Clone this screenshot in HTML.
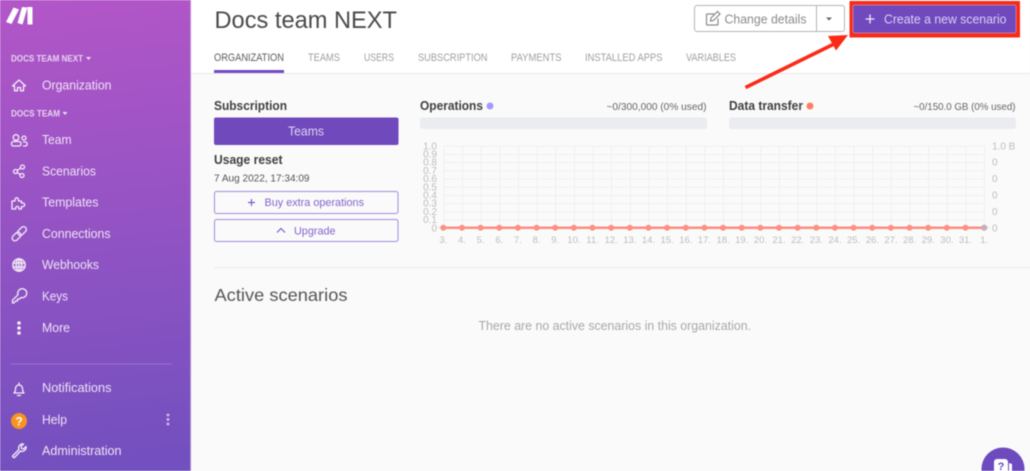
<!DOCTYPE html>
<html><head><meta charset="utf-8"><style>
html,body{margin:0;padding:0;width:1030px;height:471px;overflow:hidden;background:#fafafa}
svg{display:block;filter:blur(.4px)}
text{font-family:"Liberation Sans",sans-serif;white-space:pre}
.n{font-size:12.5px;fill:#f0e2f6}
.h{font-size:9.5px;font-weight:bold;fill:#e8d3ef}
.i{fill:none;stroke:#f5ecf9;stroke-width:1.3;stroke-linecap:round;stroke-linejoin:round}
.t{font-size:10.800px;fill:#a0a0a0}
.b{font-size:12.5px;font-weight:bold;fill:#3f3f3f}
.c{font-size:10px;fill:#bdbdbd}
.x{font-size:9.500px;fill:#bdbdbd;text-anchor:middle}
.p{font-size:11px;fill:#8464cd}
.u{font-size:10.500px;fill:#666}
</style></head><body>
<svg width="1030" height="471" viewBox="0 0 1030 471" xmlns="http://www.w3.org/2000/svg">
<defs>
<linearGradient id="sb" x1="70" y1="0" x2="120" y2="471" gradientUnits="userSpaceOnUse"><stop offset="0" stop-color="#b256c8"/><stop offset="1" stop-color="#7250bf"/></linearGradient>
<pattern id="g" x="443.300" y="145.700" width="18.650" height="8.200" patternUnits="userSpaceOnUse"><path d="M.5 0V8.200M0 .5H18.650" stroke="#f0f0f0" stroke-width="1" fill="none"/></pattern>
</defs>
<rect width="1030" height="471" fill="#fafafa"/>
<rect x="191" width="839" height="73" fill="#fff"/>
<rect x="191" y="73" width="839" height="1" fill="#e9e9e9"/>

<!-- sidebar -->
<rect width="191" height="471" fill="url(#sb)"/>
<rect x="190" width="1" height="471" fill="#c9a8de" opacity=".6"/>
<g fill="#fff"><path d="M6 22 13.500 7.500 19 9.500 11.500 24Z"/><path d="M17.500 23 22 7 27.500 7.500 22.500 24.500Z"/><path d="M27.500 7H32.500V24.500H27.500Z"/></g>

<text class="h" x="11" y="61.500" textLength="72" lengthAdjust="spacingAndGlyphs">DOCS TEAM NEXT</text><path d="M86 57h5l-2.500 3z" fill="#eddcf3"/>
<text class="h" x="11" y="116.500" textLength="49" lengthAdjust="spacingAndGlyphs">DOCS TEAM</text><path d="M62.500 112h5l-2.500 3z" fill="#eddcf3"/>

<text class="n" x="42" y="89.500" textLength="69.500" lengthAdjust="spacingAndGlyphs">Organization</text>
<text class="n" x="42" y="144" textLength="29.500" lengthAdjust="spacingAndGlyphs">Team</text>
<text class="n" x="42" y="175.500" textLength="54" lengthAdjust="spacingAndGlyphs">Scenarios</text>
<text class="n" x="42" y="206.500" textLength="56.500" lengthAdjust="spacingAndGlyphs">Templates</text>
<text class="n" x="42" y="238" textLength="68.500" lengthAdjust="spacingAndGlyphs">Connections</text>
<text class="n" x="42" y="269" textLength="57" lengthAdjust="spacingAndGlyphs">Webhooks</text>
<text class="n" x="42" y="300.500" textLength="26" lengthAdjust="spacingAndGlyphs">Keys</text>
<text class="n" x="42" y="332" textLength="28" lengthAdjust="spacingAndGlyphs">More</text>
<rect x="10" y="363.500" width="162" height="1" fill="#a27fd8" opacity=".7"/>
<text class="n" x="42" y="392" textLength="69.500" lengthAdjust="spacingAndGlyphs">Notifications</text>
<text class="n" x="42" y="424" textLength="25" lengthAdjust="spacingAndGlyphs">Help</text>
<text class="n" x="42" y="455" textLength="79.500" lengthAdjust="spacingAndGlyphs">Administration</text>

<!-- sidebar icons -->
<path class="i" d="M12.500 86 19 80l6.500 6h-2v4.800h-3v-3.300h-3v3.300h-3V86z"/>
<g class="i"><circle cx="16" cy="137.500" r="2.800"/><rect x="11.500" y="141.500" width="9.500" height="4.500" rx="2"/><circle cx="24" cy="138" r="2"/><path d="M23.500 142h1.700a1.900 1.900 0 0 1 0 4h-1.700"/></g>
<g class="i"><circle cx="15.500" cy="171.500" r="2"/><circle cx="22.500" cy="167" r="2"/><circle cx="22" cy="175.500" r="2"/><path d="M17.300 170.500 20.700 168M17.300 172.500 20.200 174.500"/></g>
<path class="i" d="M12 209v-8h3v-1.500a1.700 1.700 0 0 1 3.400 0V201h3v2h1.500a1.800 1.800 0 0 1 0 3.600h-1.500V209h-2.500v-1a1.600 1.600 0 0 0-3.200 0v1z"/>
<g class="i"><rect x="11.500" y="233.700" width="10" height="5.600" rx="2.800" transform="rotate(-45 16.500 236.500)"/><rect x="17" y="228.200" width="10" height="5.600" rx="2.800" transform="rotate(-45 22 231)"/></g>
<g class="i"><circle cx="19" cy="265" r="6.200" fill="#f3e8f7" fill-opacity=".2"/><ellipse cx="19" cy="265" rx="2.800" ry="6.200"/><path d="M13 263h12M13 267h12M19 259v12"/></g>
<path class="i" d="M12.500 303v-2.800l5.500-5.500a4.500 4.500 0 1 1 3 2.800L19.500 299h-2v2h-2l-1.500 2z"/>
<g fill="#f5ecf8"><circle cx="19" cy="323" r="1.800"/><circle cx="19" cy="328" r="1.800"/><circle cx="19" cy="333" r="1.800"/></g>
<path class="i" d="M14 393h10c-1.500-1.500-1.500-3-1.500-4.500a3.500 3.500 0 0 0-7 0c0 1.500 0 3-1.500 4.500zM17.500 395.500h3M19 383v1.500"/>
<circle cx="19" cy="421" r="8" fill="#f7941d"/><text x="19" y="425.500" text-anchor="middle" style="font-size:12px;font-weight:bold" fill="#fff">?</text>
<g fill="#d6c0ec"><circle cx="168" cy="415" r="1.400"/><circle cx="168" cy="419.500" r="1.400"/><circle cx="168" cy="424" r="1.400"/></g>
<path class="i" d="M13.500 456.500l6.500-6.500a4 4 0 0 1 4.500-5.500l-2.500 2.500.5 2 2 .5 2.500-2.500a4 4 0 0 1-5.500 4.500l-6 6.500a1.500 1.500 0 0 1-2-1.500z" transform="translate(-1 -.5)"/>

<!-- header -->
<text x="214.500" y="28" style="font-size:24.500px" fill="#4a4a4a" textLength="182.500" lengthAdjust="spacingAndGlyphs">Docs team NEXT</text>
<text class="t" x="214" y="61" style="fill:#5c5c5c" textLength="70" lengthAdjust="spacingAndGlyphs">ORGANIZATION</text>
<text class="t" x="308" y="61" textLength="32" lengthAdjust="spacingAndGlyphs">TEAMS</text>
<text class="t" x="364" y="61" textLength="30" lengthAdjust="spacingAndGlyphs">USERS</text>
<text class="t" x="418" y="61" textLength="69.500" lengthAdjust="spacingAndGlyphs">SUBSCRIPTION</text>
<text class="t" x="511" y="61" textLength="50.500" lengthAdjust="spacingAndGlyphs">PAYMENTS</text>
<text class="t" x="585" y="61" textLength="77.500" lengthAdjust="spacingAndGlyphs">INSTALLED APPS</text>
<text class="t" x="686" y="61" textLength="50" lengthAdjust="spacingAndGlyphs">VARIABLES</text>
<rect x="214" y="70" width="70" height="3" fill="#7349c6"/>

<!-- top buttons -->
<rect x="694.500" y="5.500" width="150" height="26" rx="2.500" fill="#fff" stroke="#b4b4b4"/>
<path d="M816.500 5.500v26" stroke="#b4b4b4"/>
<path d="M714 14h-6.500a1 1 0 0 0-1 1v9a1 1 0 0 0 1 1h9.500a1 1 0 0 0 1-1v-5.500M710.500 21l.5-3 6.500-6.500 2.500 2.500-6.500 6.500z" fill="none" stroke="#8a8a8a" stroke-width="1.200"/>
<text x="724.500" y="23.500" style="font-size:13px" fill="#8a8a8a" textLength="82" lengthAdjust="spacingAndGlyphs">Change details</text>
<path d="M826 17.500h6l-3 3z" fill="#666"/>

<rect x="849.500" y="1" width="170.500" height="36.500" fill="#fb2a16"/>
<rect x="853" y="5" width="163" height="28" rx="1.500" fill="#7049bd" stroke="#e8e0f5" stroke-width=".4"/>
<path d="M870 14.500v9M865.500 19h9" stroke="#f2ecfa" stroke-width="1.300"/>
<text x="884" y="23.500" style="font-size:13px" fill="#dccff3" textLength="122.500" lengthAdjust="spacingAndGlyphs">Create a new scenario</text>

<!-- arrow -->
<path d="M745.500 87.500 834 44" stroke="#fb2a16" stroke-width="3.500"/>
<path d="M848 35 828 36 836 50.500z" fill="#fb2a16"/>

<!-- left col -->
<text class="b" x="214" y="110" textLength="73" lengthAdjust="spacingAndGlyphs">Subscription</text>
<rect x="214" y="117.500" width="184.500" height="27.500" rx="2" fill="#7049bd"/>
<text x="288" y="135.500" style="font-size:12.500px" fill="#dfd3f3" textLength="36" lengthAdjust="spacingAndGlyphs">Teams</text>
<text class="b" x="214" y="164" textLength="68.500" lengthAdjust="spacingAndGlyphs">Usage reset</text>
<text x="214" y="181.500" style="font-size:10.500px" fill="#555" textLength="95.500" lengthAdjust="spacingAndGlyphs">7 Aug 2022, 17:34:09</text>
<rect x="214.500" y="191.500" width="183.500" height="22" rx="2" fill="none" stroke="#a48adb"/>
<path d="M251.500 199v7M248 202.500h7" stroke="#7d5cc9" stroke-width="1.200"/>
<text class="p" x="264.500" y="206" textLength="99.500" lengthAdjust="spacingAndGlyphs">Buy extra operations</text>
<rect x="214.500" y="219.500" width="183.500" height="22" rx="2" fill="none" stroke="#a48adb"/>
<path d="M277 232.500l4-4 4 4" fill="none" stroke="#7d5cc9" stroke-width="1.200"/>
<text class="p" x="294" y="234.500" textLength="41.500" lengthAdjust="spacingAndGlyphs">Upgrade</text>

<!-- stats -->
<text class="b" x="420" y="110" textLength="63" lengthAdjust="spacingAndGlyphs">Operations</text>
<circle cx="490" cy="106" r="3.500" fill="#a29bf8"/>
<text class="u" x="606.500" y="110" textLength="100" lengthAdjust="spacingAndGlyphs">~0/300,000 (0% used)</text>
<rect x="420" y="117.500" width="287" height="11.500" rx="2.500" fill="#eaecef"/>
<text class="b" x="729" y="110" textLength="74" lengthAdjust="spacingAndGlyphs">Data transfer</text>
<circle cx="810" cy="106" r="3.500" fill="#fc7f63"/>
<text class="u" x="913.500" y="110" textLength="102" lengthAdjust="spacingAndGlyphs">~0/150.0 GB (0% used)</text>
<rect x="729" y="117.500" width="287" height="11.500" rx="2.500" fill="#eaecef"/>

<!-- chart -->
<rect x="443" y="145.500" width="541.500" height="82.500" fill="url(#g)"/>
<path d="M984.500 145.500v82.500" stroke="#f0f0f0"/>
<g class="c" text-anchor="end">
<text x="437" y="149.300">1.0</text><text x="437" y="157.500">0.9</text><text x="437" y="165.700">0.8</text><text x="437" y="173.900">0.7</text><text x="437" y="182.100">0.6</text><text x="437" y="190.300">0.5</text><text x="437" y="198.500">0.4</text><text x="437" y="206.700">0.3</text><text x="437" y="214.900">0.2</text><text x="437" y="223.100">0.1</text><text x="437" y="231.300">0</text>
</g>
<path d="M438.500 227.500h4M985 227.500h4" stroke="#d8d8d8"/>
<g class="c">
<text x="992" y="149.300">1.0 B</text><text x="992" y="165.500">0</text><text x="992" y="182">0</text><text x="992" y="198.500">0</text><text x="992" y="215">0</text><text x="992" y="231.300">0</text>
</g>
<g class="x">
<text x="443.300" y="243">3.</text><text x="462" y="243">4.</text><text x="480.600" y="243">5.</text><text x="499.300" y="243">6.</text><text x="517.900" y="243">7.</text><text x="536.600" y="243">8.</text><text x="555.200" y="243">9.</text><text x="573.900" y="243">10.</text><text x="592.500" y="243">11.</text><text x="611.200" y="243">12.</text><text x="629.800" y="243">13.</text><text x="648.500" y="243">14.</text><text x="667.100" y="243">15.</text><text x="685.800" y="243">16.</text><text x="704.400" y="243">17.</text><text x="723.100" y="243">18.</text><text x="741.700" y="243">19.</text><text x="760.400" y="243">20.</text><text x="779" y="243">21.</text><text x="797.700" y="243">22.</text><text x="816.300" y="243">23.</text><text x="835" y="243">24.</text><text x="853.600" y="243">25.</text><text x="872.300" y="243">26.</text><text x="890.900" y="243">27.</text><text x="909.600" y="243">28.</text><text x="928.200" y="243">29.</text><text x="946.900" y="243">30.</text><text x="965.500" y="243">31.</text><text x="984.200" y="243">1.</text>
</g>
<path d="M443.300 227.700H984.200" stroke="#fb8d7d" stroke-width="2.500"/>
<path d="M443.300 227.700H984.200" stroke="#fb9083" stroke-width="6" stroke-linecap="round" stroke-dasharray="0 18.650"/>
<circle cx="984.200" cy="227.700" r="3" fill="#c7aeb8"/>

<rect x="214" y="267" width="816" height="1" fill="#ebebeb"/>
<text x="214.500" y="301" style="font-size:17.500px" fill="#555" textLength="133" lengthAdjust="spacingAndGlyphs">Active scenarios</text>
<text x="478.500" y="330" style="font-size:12.500px" fill="#a8a8a8" textLength="272.500" lengthAdjust="spacingAndGlyphs">There are no active scenarios in this organization.</text>

<!-- chat bubble -->
<circle cx="1003" cy="469" r="21.500" fill="#6d4abd"/>
<path d="M994 471v-9a3 3 0 0 1 3-3h8a3 3 0 0 1 3 3v9z" fill="#fff"/>
<path d="M1009 463l3 1v7h-3z" fill="#fff"/>
<text x="1001" y="470" text-anchor="middle" style="font-size:11px;font-weight:bold" fill="#6d4abd">?</text>
</svg>
</body></html>
